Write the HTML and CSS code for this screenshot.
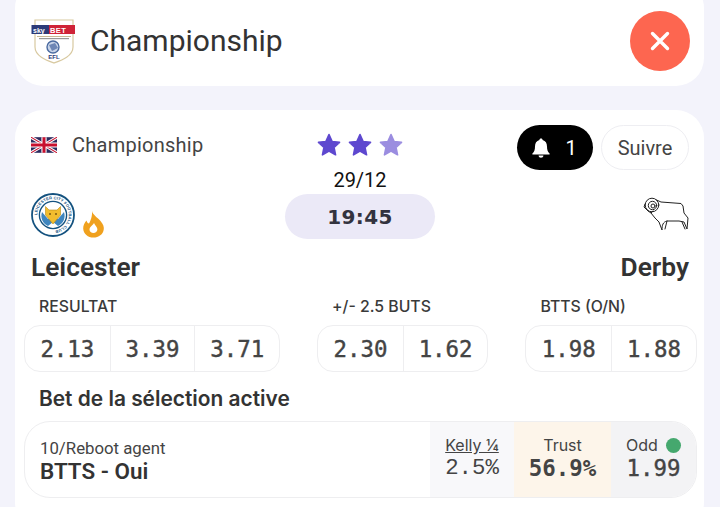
FILE: index.html
```html
<!DOCTYPE html>
<html lang="fr">
<head>
<meta charset="utf-8">
<title>Championship</title>
<link rel="stylesheet" href="styles.css">
</head>
<body>
<header class="top-card">
  <svg class="efl-logo" viewBox="0 0 46 46" aria-hidden="true">
    <path d="M4 2 H42 V29 C42 38 31 42 23 45 C15 42 4 38 4 29 Z" fill="#fff" stroke="#d8c9a0" stroke-width="1.2"/>
    <rect x="0.5" y="7" width="43" height="9" fill="#2c3a78"/>
    <rect x="18" y="7" width="26" height="9" fill="#cf2338"/>
    <text x="2" y="14.5" class="logo-sky">sky</text>
    <text x="19" y="14.5" class="logo-bet">BET</text>
    <rect x="6" y="18" width="34" height="0.8" fill="#b9a77a"/>
    <rect x="8" y="20" width="30" height="1.2" fill="#999"/>
    <circle cx="22" cy="29" r="6" fill="#c8d4e8" stroke="#4a6aa0" stroke-width="1.4"/>
    <path d="M18 27 L24 25 L27 30 L21 33 Z" fill="#6d86b5"/>
    <text x="23" y="41" text-anchor="middle" class="logo-efl">EFL</text>
  </svg>
  <h1 class="top-title">Championship</h1>
  <button class="close-btn" aria-label="Fermer">
    <svg viewBox="0 0 24 24" width="24" height="24" aria-hidden="true"><path d="M4.5 4.5 L19.5 19.5 M19.5 4.5 L4.5 19.5" stroke="#fff" stroke-width="3.4" stroke-linecap="round"/></svg>
  </button>
</header>

<main class="match-card">
  <div class="head-row">
    <div class="league">
      <svg class="flag" viewBox="0 0 60 36" aria-hidden="true">
        <rect width="60" height="36" fill="#2b2b5e"/>
        <path d="M0 0 L60 36 M60 0 L0 36" stroke="#fff" stroke-width="7"/>
        <path d="M0 0 L60 36 M60 0 L0 36" stroke="#c8102e" stroke-width="2.5"/>
        <path d="M30 0 V36 M0 18 H60" stroke="#fff" stroke-width="12"/>
        <path d="M30 0 V36 M0 18 H60" stroke="#c8102e" stroke-width="7"/>
      </svg>
      <span class="league-name">Championship</span>
    </div>
    <div class="center-col">
      <div class="stars">
        <svg class="star" viewBox="0 0 24 24" aria-hidden="true"><path d="M12 3 L14.7 9 L21 9.7 L16.3 14 L17.6 20.4 L12 17.2 L6.4 20.4 L7.7 14 L3 9.7 L9.3 9 Z"/></svg>
        <svg class="star" viewBox="0 0 24 24" aria-hidden="true"><path d="M12 3 L14.7 9 L21 9.7 L16.3 14 L17.6 20.4 L12 17.2 L6.4 20.4 L7.7 14 L3 9.7 L9.3 9 Z"/></svg>
        <svg class="star star-light" viewBox="0 0 24 24" aria-hidden="true"><path d="M12 3 L14.7 9 L21 9.7 L16.3 14 L17.6 20.4 L12 17.2 L6.4 20.4 L7.7 14 L3 9.7 L9.3 9 Z"/></svg>
      </div>
      <div class="date">29/12</div>
      <div class="time">19:45</div>
    </div>
    <div class="actions">
      <button class="bell-btn">
        <svg viewBox="0 0 24 24" width="24" height="24" aria-hidden="true"><path d="M12 2.5 C13 2.5 13.6 3.2 13.6 4 C16.6 4.8 18 7.4 18 10.4 C18 14 18.8 15.6 20.6 17.4 V18.4 H3.4 V17.4 C5.2 15.6 6 14 6 10.4 C6 7.4 7.4 4.8 10.4 4 C10.4 3.2 11 2.5 12 2.5 Z M9.6 19.6 H14.4 C14.4 21 13.3 21.8 12 21.8 C10.7 21.8 9.6 21 9.6 19.6 Z" fill="#fff"/></svg>
        <span>1</span>
      </button>
      <button class="follow-btn">Suivre</button>
    </div>
  </div>

  <div class="teams">
    <div class="team">
      <div class="crest-row">
        <svg class="lei-crest" viewBox="0 0 44 44" aria-hidden="true">
          <defs><path id="ring" d="M22 22 m-15.8 0 a15.8 15.8 0 1 1 31.6 0 a15.8 15.8 0 1 1 -31.6 0"/></defs>
          <circle cx="22" cy="22" r="21" fill="#fff" stroke="#14527f" stroke-width="1.8"/>
          <circle cx="22" cy="22" r="13.6" fill="#fff" stroke="#14527f" stroke-width="1.4"/>
          <text class="lei-text"><textPath href="#ring">LEICESTER CITY FOOTBALL CLUB</textPath></text>
          <path d="M11 19 C9 25 12 31 17 33 L22 29 L27 33 C32 31 35 25 33 19 L27 26 H17 Z" fill="#3f86bf"/>
          <path d="M14.5 13.5 L18 17 H26 L29.5 13.5 L29.5 22 L22 31 L14.5 22 Z" fill="#f1bd2e" stroke="#b98a18" stroke-width=".6"/>
          <circle cx="19" cy="21" r="1" fill="#7a5a10"/><circle cx="25" cy="21" r="1" fill="#7a5a10"/>
        </svg>
        <svg class="flame" viewBox="0 0 21 27" aria-hidden="true"><path fill-rule="evenodd" d="M9 0 C10 4 14 6 17.5 10 C20.5 13.5 21 16 20.8 18 C20.3 23.5 15.5 26.6 10.5 26.6 C5 26.6 .4 23 .2 17.5 C.1 14.5 1.5 11.5 3.5 9.5 C4 11.5 5 12.5 6 12.5 C7.5 10 9.5 5 9 0 Z M11 12 C9.5 14.5 6.5 16 6.5 18.6 C6.5 20.8 8.4 22 10.4 22 C12.6 22 14.4 20.4 14.4 18.2 C14.4 16 12 14.5 11 12 Z" fill="#f0a11e"/></svg>
      </div>
      <div class="team-name">Leicester</div>
    </div>
    <div class="team team-away">
      <div class="crest-row crest-away">
        <svg class="ram" viewBox="0 0 46 36" aria-hidden="true">
          <g fill="none" stroke="#222" stroke-width="1" stroke-linejoin="round" stroke-linecap="round">
            <circle cx="9" cy="9" r="6.8"/><circle cx="9.5" cy="9.5" r="4.2"/><circle cx="10" cy="10" r="2"/>
            <path d="M2 8 L1 11 L5 15 L8 17 L10 15"/>
            <path d="M13.5 4 L18 6 L38 7.5 L40 10 L41 17 L45 22 L44 33 L41 26 L36 25 L24 25 C20 26 19 29 19 34 L16 26 L12 22 L8 17"/>
            <path d="M24 25 L22 33 M39 26 L42 33"/>
          </g>
        </svg>
      </div>
      <div class="team-name">Derby</div>
    </div>
  </div>

  <div class="markets">
    <section class="market">
      <div class="market-label">RESULTAT</div>
      <div class="odds"><span>2.13</span><span>3.39</span><span>3.71</span></div>
    </section>
    <section class="market">
      <div class="market-label">+/- 2.5 BUTS</div>
      <div class="odds"><span>2.30</span><span>1.62</span></div>
    </section>
    <section class="market">
      <div class="market-label">BTTS (O/N)</div>
      <div class="odds"><span>1.98</span><span>1.88</span></div>
    </section>
  </div>

  <h2 class="bet-title">Bet de la sélection active</h2>

  <div class="bet-row">
    <div class="bet-main">
      <div class="bet-agent">10/Reboot agent</div>
      <div class="bet-pick">BTTS - Oui</div>
    </div>
    <div class="bet-cell cell-kelly">
      <div class="cell-label kelly-label">Kelly ¼</div>
      <div class="cell-value value-light">2.5%</div>
    </div>
    <div class="bet-cell cell-trust">
      <div class="cell-label">Trust</div>
      <div class="cell-value value-bold">56.9%</div>
    </div>
    <div class="bet-cell cell-odd">
      <div class="cell-label">Odd <i class="dot"></i></div>
      <div class="cell-value">1.99</div>
    </div>
  </div>
</main>
</body>
</html>
```
FILE: styles.css
```css
* { box-sizing: border-box; }
html, body { margin: 0; height: 100%; overflow: hidden; }
body {
  background: #f3f3fb;
  font-family: Roboto, "Liberation Sans", sans-serif;
  color: #333;
  padding: 0 16px 0 15px;
}
button { font-family: inherit; cursor: pointer; }

.top-card {
  display: flex;
  align-items: center;
  height: 106px;
  margin-top: -20px;
  padding: 16px 14px 0 16px;
  background: #fff;
  border-radius: 28px;
}
.efl-logo { width: 46px; height: 46px; flex: none; }
.logo-sky { font: 700 7px "Liberation Sans", sans-serif; fill: #fff; }
.logo-bet { font: 700 7.5px "Liberation Sans", sans-serif; fill: #fff; letter-spacing: .4px; }
.logo-efl { font: 700 6px "Liberation Sans", sans-serif; fill: #2c3a78; }
.top-title {
  margin: -2px 0 0 13px;
  flex: 1;
  font-size: 30px;
  font-weight: 400;
  color: #333;
}
.close-btn {
  width: 60px; height: 60px;
  display: flex; align-items: center; justify-content: center;
  padding: 0; border: 0; border-radius: 50%;
  background: #fd6650;
}

.match-card {
  margin-top: 24px;
  padding: 15px 7px 0 9px;
  height: 420px;
  background: #fff;
  border-radius: 28px;
}
.head-row {
  display: grid;
  grid-template-columns: 1fr 150px 1fr;
  padding: 0 0 0 7px;
  height: 68px;
  margin-right: 8px;
}
.league { display: flex; align-items: center; height: 40px; gap: 15px; }
.flag { width: 26px; height: 16px; flex: none; }
.league-name { font-size: 20px; letter-spacing: .25px; color: #444; }
.center-col { display: flex; flex-direction: column; align-items: center; }
.stars { display: flex; gap: 3px; height: 44px; padding-top: 6px; }
.star { width: 28px; height: 28px; fill: #5e48cf; stroke: #5e48cf; stroke-width: 1.4; stroke-linejoin: round; }
.star-light { fill: #9b8de0; stroke: #9b8de0; }
.date { font-size: 20px; line-height: 24px; color: #111; margin-top: -1px; }
.time {
  width: 150px; height: 45px; flex: none;
  margin-top: 2px;
  display: flex; align-items: center; justify-content: center;
  border-radius: 23px;
  background: #ebe9f7;
  font: 700 20px "DejaVu Sans", sans-serif;
  letter-spacing: .4px;
  color: #33333f;
}
.actions { display: flex; justify-content: flex-end; gap: 8px; height: 45px; }
.bell-btn {
  width: 76px; height: 45px;
  display: flex; align-items: center; justify-content: center; gap: 12px;
  padding: 0 4px 0 0; border: 0; border-radius: 23px;
  background: #000; color: #fff; font-size: 20px;
}
.follow-btn {
  width: 88px; height: 45px;
  padding: 0;
  border: 1px solid #eeeef2; border-radius: 23px;
  background: #fff; color: #444; font-size: 20px;
}

.teams { display: flex; justify-content: space-between; padding: 0 8px 0 7px; }
.crest-row { display: flex; align-items: flex-end; gap: 8px; height: 45px; }
.lei-crest { width: 44px; height: 44px; margin-bottom: 1px; }
.lei-text { font: 700 4px "Liberation Sans", sans-serif; fill: #14527f; letter-spacing: .15px; }
.flame { width: 21px; height: 27px; }
.crest-away { justify-content: flex-end; align-items: flex-start; padding-top: 3px; }
.ram { width: 46px; height: 36px; }
.team-name { font-size: 26.3px; font-weight: 600; line-height: 30px; margin-top: 14px; color: #333; }
.team-away { text-align: right; }

.markets { display: flex; gap: 37px; margin-top: 15px; }
.market-label {
  font: 500 15.8px/20px Inter, Roboto, sans-serif;
  padding-left: 15px; color: #3a3a3a;
}
.odds {
  display: flex;
  margin-top: 8px;
  height: 47px;
  border: 1px solid #eeeef0;
  border-radius: 16px;
}
.odds span {
  width: 84.7px;
  display: flex; align-items: center; justify-content: center;
  font: 400 22.4px "DejaVu Sans Mono", monospace;
  -webkit-text-stroke: .4px #444;
  color: #444;
}
.odds span + span { border-left: 1px solid #eeeef0; }

.bet-title { margin: 14px 0 0 15px; font: 600 20.9px/26px Inter, Roboto, sans-serif; color: #333; }

.bet-row {
  display: flex;
  margin-top: 9px;
  width: 673px; height: 77px;
  border: 1px solid #eeeef0;
  border-radius: 26px;
  overflow: hidden;
}
.bet-main { flex: 1; padding: 16px 0 0 15px; }
.bet-agent { font-size: 16.8px; line-height: 20px; color: #444; }
.bet-pick { font-size: 22.4px; font-weight: 600; line-height: 26px; color: #333; }
.bet-cell {
  display: flex; flex-direction: column; align-items: center;
  padding-top: 13px;
  text-align: center;
}
.cell-kelly { width: 84px; background: #f8f8fa; }
.cell-trust { width: 97px; background: #fdf5ea; }
.cell-odd { width: 85px; background: #f3f3f5; }
.cell-label { font: 400 16px/20px Inter, Roboto, sans-serif; color: #444; display: flex; align-items: center; gap: 8px; }
.kelly-label { text-decoration: underline; }
.cell-value { font: 400 22.4px/26px "DejaVu Sans Mono", monospace; -webkit-text-stroke: .4px #444; color: #444; }
.value-light { font-family: "Liberation Mono", monospace; -webkit-text-stroke: 0; }
.value-bold { font-weight: 700; -webkit-text-stroke: 0; }
.dot { width: 15px; height: 15px; border-radius: 50%; background: #45a86e; display: block; }
```
